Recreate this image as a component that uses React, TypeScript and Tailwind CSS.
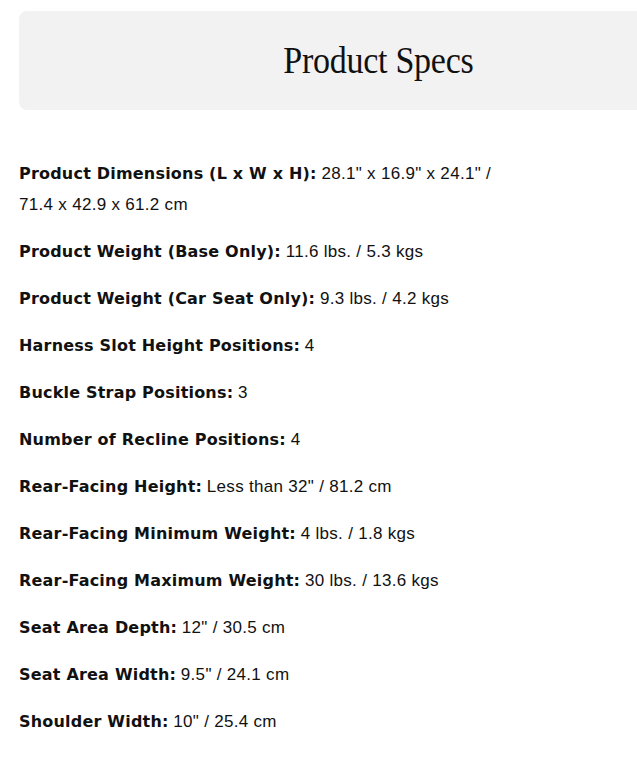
const specs = [
  { label: "Product Dimensions (L x W x H):", value: '28.1" x 16.9" x 24.1" / 71.4 x 42.9 x 61.2 cm' },
  { label: "Product Weight (Base Only):", value: "11.6 lbs. / 5.3 kgs" },
  { label: "Product Weight (Car Seat Only):", value: "9.3 lbs. / 4.2 kgs" },
  { label: "Harness Slot Height Positions:", value: "4" },
  { label: "Buckle Strap Positions:", value: "3" },
  { label: "Number of Recline Positions:", value: "4" },
  { label: "Rear-Facing Height:", value: 'Less than 32" / 81.2 cm' },
  { label: "Rear-Facing Minimum Weight:", value: "4 lbs. / 1.8 kgs" },
  { label: "Rear-Facing Maximum Weight:", value: "30 lbs. / 13.6 kgs" },
  { label: "Seat Area Depth:", value: '12" / 30.5 cm' },
  { label: "Seat Area Width:", value: '9.5" / 24.1 cm' },
  { label: "Shoulder Width:", value: '10" / 25.4 cm' },
];

export default function App() {
  return (
    <div className="w-[637px] h-[770px] overflow-hidden bg-white">
      <div className="pl-[19px] pt-[11px]">
        {/* Header */}
        <div className="w-[718px] h-[99px] rounded-lg bg-[#f2f2f2] flex items-center justify-center">
          <h2 className="text-[37px] text-[#111] tracking-[-0.3px] [font-family:'Liberation_Serif',serif] scale-x-[0.92]">
            Product Specs
          </h2>
        </div>

        {/* Specs list */}
        <div className="mt-[48px] w-[480px] flex flex-col gap-4 text-[17px] leading-[31px] text-[#111] [font-family:'Liberation_Sans',sans-serif]">
          {specs.map((s) => (
            <p key={s.label}>
              <span className="font-bold text-[16px] tracking-[0.2px] [font-family:'DejaVu_Sans',sans-serif]">
                {s.label}
              </span>{" "}
              <span className="tracking-[0.3px]">{s.value}</span>
            </p>
          ))}
        </div>
      </div>
    </div>
  );
}
